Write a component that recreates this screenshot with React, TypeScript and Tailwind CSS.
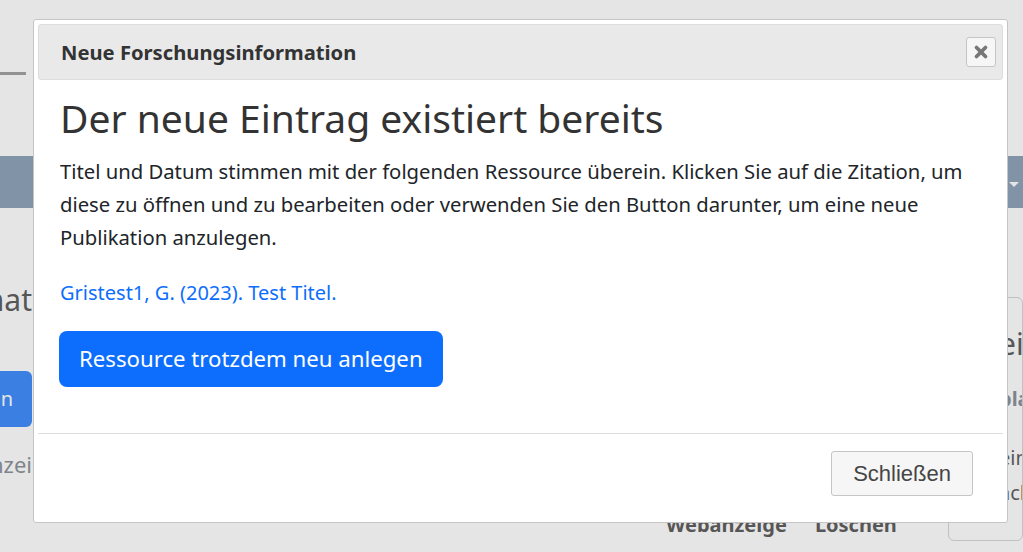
import { X } from "lucide-react";

export default function App() {
  return (
    <div className="relative h-[552px] w-[1023px] overflow-hidden bg-white font-['Noto_Sans',sans-serif] text-[#333]">
      {/* Page behind the dialog */}
      <div className="flex h-[156px] items-start">
        <div className="mt-[72px] h-[3px] w-[26px] bg-[#888]" />
      </div>
      <div className="flex h-[52px] items-center justify-end bg-[#6f8aa6] pr-[4px]">
        <span className="mt-[4px] h-0 w-0 border-x-[5px] border-t-[5px] border-x-transparent border-t-white" />
      </div>
      <div className="flex">
        <div className="flex w-[32px] flex-col items-end overflow-hidden">
          <div className="mt-[74px] whitespace-nowrap text-[30px] leading-[36px] text-[#333]">
            Forschungsinformat
          </div>
          <div className="mt-[53px] flex h-[56px] items-center whitespace-nowrap rounded-r-[6px] bg-[#0d6efd] pl-[10px] pr-[19px] text-[20px] text-white">
            Anlegen
          </div>
          <div className="mt-[22px] whitespace-nowrap text-[22px] leading-[30px] text-[#6c757d]">
            Webanzei
          </div>
        </div>
        <div className="ml-auto mt-[89px] h-[244px] w-[75px] overflow-hidden rounded-[6px] border border-[#ccc] pl-[50px]">
          <div className="mt-[28px] whitespace-nowrap text-[30px] leading-[36px]">eine</div>
          <div className="mt-[22px] whitespace-nowrap text-[20px] font-bold leading-[30px] text-[#6c757d]">
            bla
          </div>
          <div className="mt-[26px] whitespace-nowrap text-[20px] leading-[35px]">ein</div>
          <div className="whitespace-nowrap text-[20px] leading-[35px]">ach</div>
        </div>
      </div>
      <div className="absolute left-[666px] top-[510px] flex gap-[28px] text-[20px] font-bold text-[#333]">
        <span>Webanzeige</span>
        <span>Löschen</span>
      </div>

      {/* Overlay */}
      <div className="absolute inset-0 bg-[#aaaaaa]/30" />

      {/* Dialog */}
      <div className="absolute left-[33px] top-[19px] flex h-[504px] w-[975px] flex-col rounded-[3px] border border-[#c5c5c5] bg-white p-[4px]">
        <div className="flex h-[56px] items-center justify-between rounded-[3px] border border-[#dddddd] bg-[#e9e9e9] pl-[22px] pr-[6px]">
          <span className="text-[20.2px] font-bold text-[#333]">Neue Forschungsinformation</span>
          <button className="flex h-[30px] w-[30px] items-center justify-center rounded-[3px] border border-[#c5c5c5] bg-[#f6f6f6]">
            <X size={18} strokeWidth={5} className="text-[#777]" />
          </button>
        </div>
        <div className="flex-1 px-[22px] pt-[14px]">
          <h1 className="text-[39px] leading-[48px] text-[#333]">Der neue Eintrag existiert bereits</h1>
          <p className="mt-[13px] text-[20.25px] leading-[33px] text-[#212529]">
            Titel und Datum stimmen mit der folgenden Ressource überein. Klicken Sie auf die Zitation, um diese zu
            öffnen und zu bearbeiten oder verwenden Sie den Button darunter, um eine neue Publikation anzulegen.
          </p>
          <a href="#" className="mt-[24px] block text-[20px] leading-[30px] text-[#0d6efd]">
            Gristest1, G. (2023). Test Titel.
          </a>
          <button className="-ml-px mt-[23px] h-[56px] rounded-[8px] bg-[#0d6efd] px-[20px] text-[22.2px] text-white">
            Ressource trotzdem neu anlegen
          </button>
        </div>
        <div className="flex h-[85px] justify-end border-t border-[#dddddd] pr-[30px] pt-[17px]">
          <button className="h-[45px] rounded-[3px] border border-[#c5c5c5] bg-[#f6f6f6] px-[21px] font-['Liberation_Sans',sans-serif] text-[22px] text-[#454545]">
            Schließen
          </button>
        </div>
      </div>
    </div>
  );
}
